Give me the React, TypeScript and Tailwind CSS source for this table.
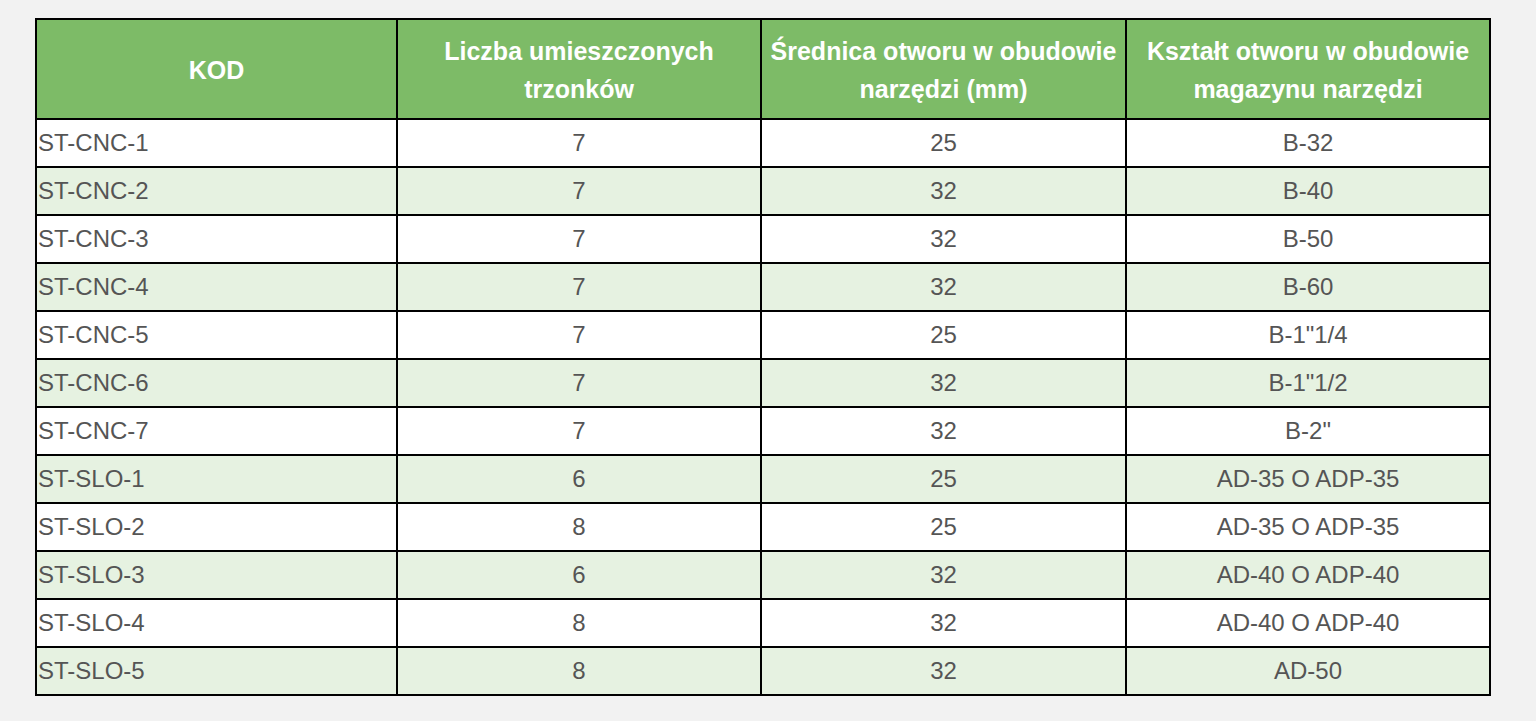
const HEADERS = [
  ['KOD'],
  ['Liczba umieszczonych', 'trzonków'],
  ['Średnica otworu w obudowie', 'narzędzi (mm)'],
  ['Kształt otworu w obudowie', 'magazynu narzędzi'],
];

const ROWS: [string, string, string, string][] = [
  ['ST-CNC-1', '7', '25', 'B-32'],
  ['ST-CNC-2', '7', '32', 'B-40'],
  ['ST-CNC-3', '7', '32', 'B-50'],
  ['ST-CNC-4', '7', '32', 'B-60'],
  ['ST-CNC-5', '7', '25', 'B-1"1/4'],
  ['ST-CNC-6', '7', '32', 'B-1"1/2'],
  ['ST-CNC-7', '7', '32', 'B-2"'],
  ['ST-SLO-1', '6', '25', 'AD-35 O ADP-35'],
  ['ST-SLO-2', '8', '25', 'AD-35 O ADP-35'],
  ['ST-SLO-3', '6', '32', 'AD-40 O ADP-40'],
  ['ST-SLO-4', '8', '32', 'AD-40 O ADP-40'],
  ['ST-SLO-5', '8', '32', 'AD-50'],
];

export default function App() {
  return (
    <div className="min-h-screen bg-[#f2f2f2] pt-[18px] pl-[35px] font-['Liberation_Sans',Arial,sans-serif]">
      <table className="w-[1454px] table-fixed border-collapse border-2 border-black text-[24px]">
        <colgroup>
          <col className="w-[361px]" />
          <col className="w-[364px]" />
          <col className="w-[365px]" />
          <col className="w-[364px]" />
        </colgroup>
        <thead>
          <tr className="bg-[#7dbb67]">
            {HEADERS.map((lines, i) => (
              <th
                key={i}
                className="border-2 border-black px-1 pt-[12px] pb-[10px] h-[100px] text-center text-[25px] font-bold text-white leading-[38px]"
              >
                {lines.map((l, j) => (
                  <div key={j}>{l}</div>
                ))}
              </th>
            ))}
          </tr>
        </thead>
        <tbody>
          {ROWS.map((row, i) => (
            <tr key={row[0]} className={i % 2 === 1 ? 'bg-[#e6f2e1]' : 'bg-white'}>
              {row.map((cell, j) => (
                <td
                  key={j}
                  className={`border-2 border-black h-[48px] px-[1px] py-0 leading-[36px] text-[#555555] ${
                    j === 0 ? 'text-left' : 'text-center'
                  }`}
                >
                  {cell}
                </td>
              ))}
            </tr>
          ))}
        </tbody>
      </table>
    </div>
  );
}
